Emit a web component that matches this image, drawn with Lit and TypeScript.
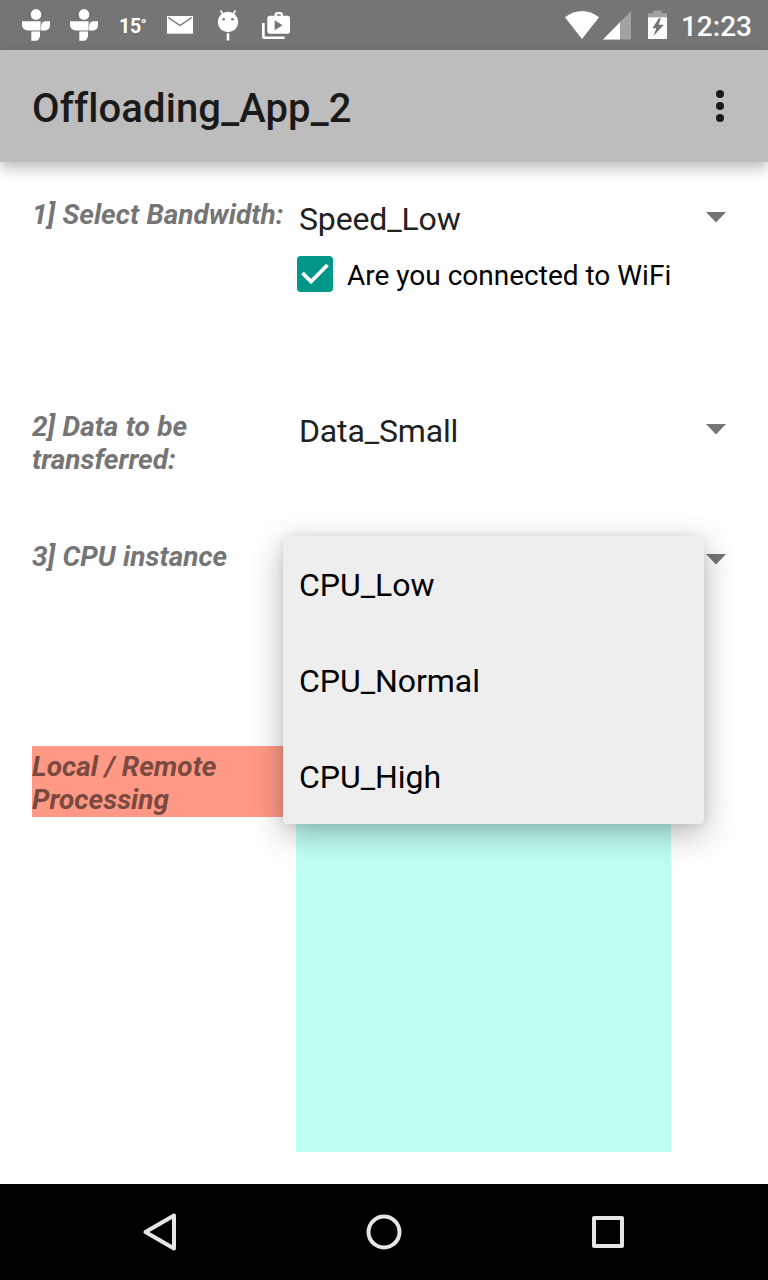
import { LitElement, html, css, svg, nothing } from "lit";
import { customElement, property } from "lit/decorators.js";

const glyph = (x: number, width: number, body: unknown) =>
  html`<svg width=${width} height="50" viewBox="${x} 0 ${width} 50" fill="#fff">${body}</svg>`;

const tunein = svg`
  <circle cx="36" cy="14.4" r="5.3"/>
  <path d="M22 21.3H40.6V30.4H28C24.5 30.4 22 28 22 24.5Z"/>
  <path d="M41.2 30.4V26C41.2 23 43 21.3 45.5 21.3H50V25C50 28.5 48 30.4 45 30.4Z"/>
  <path d="M31.3 31.5H40V35C40 38.5 38 40.8 35 40.8H31.3Z"/>`;

@customElement("status-bar")
export class StatusBar extends LitElement {
  static styles = css`
    :host { display: flex; height: 50px; background: #757575; color: #fff; padding-left: 12px; }
    svg { display: block; flex: none; }
    .temp { width: 48px; box-sizing: border-box; padding-left: 11px; font: 700 19.5px/53px Roboto, sans-serif; letter-spacing: -0.3px; white-space: nowrap; }
    .deg { font-size: 15px; line-height: 1; vertical-align: 3px; }
    .right { display: flex; margin-left: auto; padding-right: 16px; }
    .clock { font: 500 28px/53px Roboto, sans-serif; }
  `;
  render() {
    return html`
      ${glyph(12, 48, tunein)}${glyph(12, 48, tunein)}
      <span class="temp">15<span class="deg">°</span></span>
      ${glyph(156, 48, svg`<path d="M167 16H193V33.7H167Z"/><path d="M168.500 17.500L180 25.400L191.500 17.500" fill="none" stroke="#757575" stroke-width="1.6"/><path d="M169.300 17.600H190.700L180 24.600Z"/>`)}
      ${glyph(204, 48, svg`
        <circle cx="228" cy="22" r="10.2"/>
        <path d="M220.500 10.500L223.500 15M235.500 10.500L232.500 15" stroke="#fff" stroke-width="1.5"/>
        <path d="M226.700 33.300H229.300V40.500H226.700Z"/>
        <circle cx="223.700" cy="19.300" r="1.3" fill="#757575"/><circle cx="232.500" cy="19.300" r="1.3" fill="#757575"/>`)}
      ${glyph(252, 48, svg`
        <path d="M262 23H264.700V36.400H284.600V39H264.500Q262 39 262 36.500Z"/>
        <path fill-rule="evenodd" d="M269.500 15.700H274.500V14.500Q274.500 12 277 12H280.500Q283 12 283 14.500V15.700H287.500Q290 15.700 290 18.200V31.200Q290 33.700 287.500 33.700H270Q267.300 33.700 267.300 31V18.200Q267.300 15.700 269.500 15.700ZM277 15.700H280.700V14.300H277ZM274.700 20.300V30.200L282.500 25.200Z"/>`)}
      <div class="right">
        ${glyph(559, 122, svg`
          <path d="M565 17.300Q582 4.700 599 17.300L582 39Z"/>
          <path d="M631 11V39.500H603Z" fill-opacity=".33"/><path d="M620 22.200V39.500H603Z"/>
          <path d="M653.300 10.500H661.700V13.300H667V17.300H648V13.300H653.300Z" fill-opacity=".33"/>
          <path fill-rule="evenodd" d="M648 17.300H667V39H648ZM658.800 18.300L652.500 28.200H656.300L653.500 36L663.800 24.700H658.800L660.800 18.300Z"/>`)}
        <span class="clock">12:23</span>
      </div>`;
  }
}

@customElement("app-spinner")
export class AppSpinner extends LitElement {
  @property() value = "";
  static styles = css`
    :host { display: flex; align-items: center; justify-content: space-between; height: 46px; padding: 0 26px 0 16px; font: 32px/38px Roboto, sans-serif; letter-spacing: -0.15px; color: #212121; }
    span { padding-top: 4px; }
    svg { display: block; }
  `;
  render() {
    return html`<span>${this.value}</span><svg width="20" height="11" viewBox="0 0 20 11"><path d="M0 0H20L10 10.500Z" fill="#757575"/></svg>`;
  }
}

@customElement("app-root")
export class AppRoot extends LitElement {
  private options = ["CPU_Low", "CPU_Normal", "CPU_High"];
  private selected = "";

  static styles = css`
    :host { display: flex; flex-direction: column; height: 1280px; background: #fff; font-family: Roboto, sans-serif; overflow: hidden; }
    svg { display: block; }
    .toolbar { display: flex; align-items: center; justify-content: space-between; box-sizing: border-box; height: 112px; flex: none; padding: 0 44px 0 32px; background: #bdbdbd; box-shadow: 0 6px 14px rgba(0,0,0,.27); z-index: 1; }
    .title { margin: 4px 0 0; font: 500 40px/47px Roboto, sans-serif; font-variant-ligatures: none; letter-spacing: 0.12px; color: #1a1a1a; }
    .body { flex: 1; display: grid; grid-template-columns: 251px 1fr; grid-template-rows: 212px 130px 210px 1fr; padding: 32px 16px 0 32px; }
    .label { margin-right: -4px; padding-top: 4px; font: italic 700 28px/33px Roboto, sans-serif; word-spacing: 0.5px; color: #757575; }
    .label.alert { align-self: start; height: 67px; margin-right: 0; word-spacing: 0; background: #ff9985; color: #7a493f; }
    .check { display: flex; align-items: center; gap: 14px; margin: 16px 0 0 14px; font-size: 28px; line-height: 36px; height: 36px; color: #000; white-space: nowrap; }
    .check span { padding-top: 4px; }
    .output { width: 375px; margin: 0 0 32px 13px; background: #bffff3; }
    .field { position: relative; }
    .menu { position: absolute; left: 0; top: 0; width: 421px; margin: 0; padding: 0; list-style: none; background: #eee; border-radius: 4px; box-shadow: 0 10px 32px rgba(0,0,0,.29), 0 0 8px rgba(0,0,0,.08); }
    .item { height: 96px; padding-left: 16px; font-size: 32px; line-height: 98px; letter-spacing: -0.04px; color: #000; }
    .nav { display: flex; justify-content: center; align-items: center; gap: 176px; height: 96px; flex: none; background: #000; }
  `;

  render() {
    return html`
      <status-bar></status-bar>
      <header class="toolbar">
        <h1 class="title">Offloading_App_2</h1>
        <svg width="8" height="32" viewBox="0 0 8 32" fill="#1a1a1a"><circle cx="4" cy="4" r="4"/><circle cx="4" cy="16" r="4"/><circle cx="4" cy="28" r="4"/></svg>
      </header>
      <main class="body">
        <div class="label">1] Select Bandwidth:</div>
        <div>
          <app-spinner value="Speed_Low"></app-spinner>
          <div class="check">
            <svg width="36" height="36" viewBox="0 0 36 36"><rect width="36" height="36" rx="4" fill="#009688"/><path d="M5.500 17L14 25.500L30.500 9" fill="none" stroke="#fff" stroke-width="3.8"/></svg>
            <span>Are you connected to WiFi</span>
          </div>
        </div>
        <div class="label">2] Data to be transferred:</div>
        <div><app-spinner value="Data_Small"></app-spinner></div>
        <div class="label">3] CPU instance</div>
        <div class="field">
          <app-spinner value=${this.selected || nothing}></app-spinner>
          <ul class="menu">${this.options.map((o) => html`<li class="item">${o}</li>`)}</ul>
        </div>
        <div class="label alert">Local / Remote Processing</div>
        <div class="output"></div>
      </main>
      <nav class="nav">
        <svg width="48" height="48" viewBox="0 0 48 48" fill="none" stroke="#e6e6e6" stroke-width="4" stroke-linejoin="round"><path d="M38 7.500V40.500L9.500 24Z"/></svg>
        <svg width="48" height="48" viewBox="0 0 48 48" fill="none" stroke="#e6e6e6" stroke-width="4"><circle cx="24" cy="24" r="15.500"/></svg>
        <svg width="48" height="48" viewBox="0 0 48 48" fill="none" stroke="#e6e6e6" stroke-width="4" stroke-linejoin="round"><rect x="10" y="10" width="28" height="28"/></svg>
      </nav>`;
  }
}
